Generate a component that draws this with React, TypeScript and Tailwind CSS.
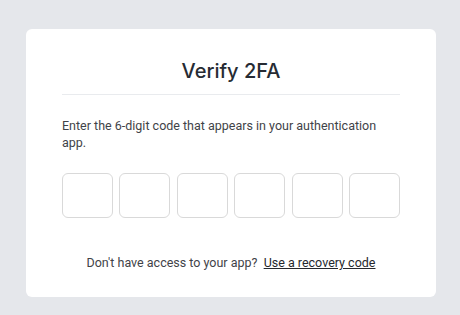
import React, { useState } from 'react';

const App: React.FC = () => {
  const [digits, setDigits] = useState<string[]>(['', '', '', '', '', '']);

  const handleChange = (index: number, value: string) => {
    const next = [...digits];
    next[index] = value.replace(/\D/g, '').slice(-1);
    setDigits(next);
  };

  return (
    <div className="min-h-screen bg-[#e5e7eb] pt-[29px] px-[26px]">
      <div className="w-[410px] bg-white rounded-[6px] px-[36px] pt-[28px] pb-[26px]">
        {/* 제목 */}
        <h1
          className="text-center text-[20px] leading-[28px] font-medium text-[#262b33] pb-[9px] border-b border-[#e9ebee]"
          style={{ fontFamily: 'Inter, "Noto Sans", sans-serif' }}
        >
          Verify 2FA
        </h1>

        <div style={{ fontFamily: 'Roboto, "Liberation Sans", sans-serif' }}>
          <p className="mt-[22px] text-[12.5px] leading-[17px] text-[#3f4348]">
            Enter the 6-digit code that appears in your authentication app.
          </p>

          {/* 코드 입력 */}
          <div className="mt-[22px] flex justify-between">
            {digits.map((d, i) => (
              <input
                key={i}
                value={d}
                onChange={(e) => handleChange(i, e.target.value)}
                inputMode="numeric"
                className="w-[51px] h-[45px] rounded-[6px] border border-[#d9d9d9] text-center text-lg outline-none"
              />
            ))}
          </div>

          <p className="mt-[36px] text-center text-[12.5px] leading-[17px] text-[#3f4348]">
            Don't have access to your app?{'\u00a0 '}
            <a href="#" className="underline text-[#26292e]">
              Use a recovery code
            </a>
          </p>
        </div>
      </div>
    </div>
  );
};

export default App;
